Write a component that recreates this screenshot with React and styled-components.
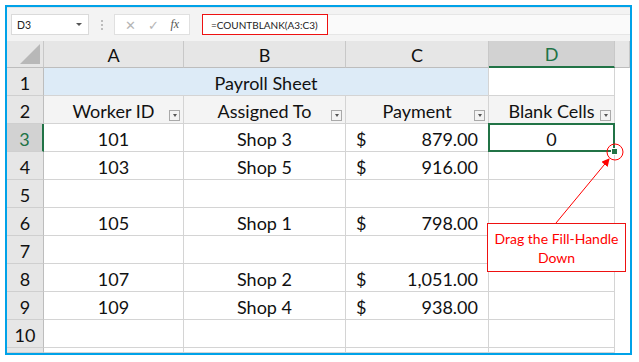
import React from 'react'
import styled, { createGlobalStyle, css } from 'styled-components'

const GlobalStyle = createGlobalStyle`
  body {
    margin: 0;
    background: #ffffff;
    font-family: Lato, "Liberation Sans", sans-serif;
  }
`

const GREEN = '#217346'
const GRID = '#d4d4d4'

const Frame = styled.div`
  margin: 5px;
  width: 627px;
  height: 350px;
  box-sizing: border-box;
  border: 2px solid #00a2e8;
  display: flex;
  flex-direction: column;
  overflow: hidden;
  background: #ffffff;
`

const FormulaBar = styled.div`
  height: 34px;
  flex: none;
  display: flex;
  align-items: center;
  padding-left: 4px;
  background: #f3f3f3;
  border-top: 1px solid #e2e2e2;
  box-sizing: border-box;
`

const NameBox = styled.div`
  width: 78px;
  height: 21px;
  box-sizing: border-box;
  background: #ffffff;
  border: 1px solid #dadada;
  display: flex;
  align-items: center;
  justify-content: space-between;
  padding: 0 6px 0 5px;
  font-size: 10.5px;
  color: #222;
`

const Caret = styled.span`
  width: 0;
  height: 0;
  border-left: 3px solid transparent;
  border-right: 3px solid transparent;
  border-top: 3px solid #555;
`

const Dots = styled.div`
  width: 25px;
  display: flex;
  flex-direction: column;
  align-items: center;
  gap: 2px;
  span {
    width: 2px;
    height: 2px;
    background: #bdbdbd;
  }
`

const FxBox = styled.div`
  width: 76px;
  height: 21px;
  box-sizing: border-box;
  background: #ffffff;
  border: 1px solid #e0e0e0;
  display: flex;
  align-items: center;
  justify-content: space-around;
  padding: 0 4px;
  color: #b5b5b5;
  font-size: 13px;
`

const Fx = styled.span`
  font-family: "Liberation Serif", serif;
  font-style: italic;
  font-size: 12px;
  color: #555;
`

const FormulaInput = styled.div`
  margin-left: 12px;
  flex: 1;
  height: 21px;
  display: flex;
  align-items: center;
  background: #fafafa;
  border-top: 1px solid #e6e6e6;
  border-bottom: 1px solid #e6e6e6;
  box-sizing: border-box;
`

const FormulaText = styled.div`
  height: 21px;
  width: 126px;
  box-sizing: border-box;
  border: 1px solid #ee1111;
  background: #ffffff;
  display: flex;
  align-items: center;
  padding-left: 8px;
  font-size: 10px;
  color: #222;
  white-space: nowrap;
`

const Sheet = styled.div`
  position: relative;
  flex: 1;
  display: grid;
  grid-template-columns: 37px 140px 162px 143px 126px 1fr;
  grid-template-rows: 27px repeat(10, 28px) 1fr;
  font-size: 18px;
  color: #111;
`

const Cell = styled.div`
  position: relative;
  box-sizing: border-box;
  border-right: 1px solid ${GRID};
  border-bottom: 1px solid ${GRID};
  display: flex;
  align-items: center;
  justify-content: ${p => p.$align || 'center'};
  padding: 2px ${p => (p.$pad ? '10px' : '0')} 0;
  white-space: nowrap;
  background: ${p => p.$bg || '#ffffff'};
  ${p => p.$span && css`grid-column: span ${p.$span};`}
  ${p => p.$selected && css`
    &::after {
      content: '';
      position: absolute;
      left: -1px;
      top: -1px;
      right: -1px;
      bottom: -1px;
      border: 2px solid ${GREEN};
    }
    &::before {
      content: '';
      position: absolute;
      right: -4px;
      bottom: -4px;
      width: 5px;
      height: 5px;
      background: ${GREEN};
      border: 1px solid #ffffff;
      z-index: 2;
    }
  `}
`

const ColHead = styled.div`
  box-sizing: border-box;
  background: ${p => (p.$active ? '#d2d2d2' : '#e6e6e6')};
  border-right: 1px solid #c8c8c8;
  border-bottom: ${p => (p.$active ? `2px solid ${GREEN}` : '1px solid #bdbdbd')};
  color: ${p => (p.$active ? GREEN : '#111')};
  display: flex;
  align-items: center;
  justify-content: center;
  padding-top: 1px;
`

const Corner = styled(ColHead)`
  position: relative;
  &::after {
    content: '';
    position: absolute;
    right: 3px;
    bottom: 3px;
    width: 0;
    height: 0;
    border-left: 20px solid transparent;
    border-bottom: 20px solid #b8b8b8;
  }
`

const RowHead = styled.div`
  box-sizing: border-box;
  background: ${p => (p.$active ? '#d2d2d2' : '#e6e6e6')};
  border-right: ${p => (p.$active ? `2px solid ${GREEN}` : '1px solid #bdbdbd')};
  border-bottom: 1px solid #cfcfcf;
  color: ${p => (p.$active ? GREEN : '#111')};
  display: flex;
  align-items: center;
  justify-content: center;
  padding-top: 2px;
`

const FilterBtn = styled.span`
  position: absolute;
  right: 3px;
  bottom: 2px;
  width: 11px;
  height: 11px;
  box-sizing: border-box;
  border: 1px solid #a9a9a9;
  background: #f3f3f3;
  display: flex;
  align-items: center;
  justify-content: center;
  &::after {
    content: '';
    border-left: 2.5px solid transparent;
    border-right: 2.5px solid transparent;
    border-top: 3px solid #555;
  }
`

const Money = styled.span`
  flex: 1;
  display: flex;
  justify-content: space-between;
`

const Callout = styled.div`
  position: absolute;
  left: 480px;
  top: 182px;
  width: 139px;
  height: 49px;
  box-sizing: border-box;
  border: 1px solid #ee1111;
  background: #ffffff;
  color: #ff0000;
  font-size: 14px;
  line-height: 19px;
  text-align: center;
  display: flex;
  flex-direction: column;
  justify-content: center;
  z-index: 3;
`

const Overlay = styled.svg`
  position: absolute;
  left: 0;
  top: 0;
  width: 100%;
  height: 100%;
  pointer-events: none;
  z-index: 4;
`

const rows = [
  null,
  ['Worker ID', 'Assigned To', 'Payment', 'Blank Cells'],
  ['101', 'Shop 3', '879.00', '0'],
  ['103', 'Shop 5', '916.00', ''],
  ['', '', '', ''],
  ['105', 'Shop 1', '798.00', ''],
  ['', '', '', ''],
  ['107', 'Shop 2', '1,051.00', ''],
  ['109', 'Shop 4', '938.00', ''],
  ['', '', '', '']
]

function App() {
  return (
    <>
      <GlobalStyle />
      <Frame>
        <FormulaBar>
          <NameBox>
            D3
            <Caret />
          </NameBox>
          <Dots>
            <span />
            <span />
            <span />
          </Dots>
          <FxBox>
            <span>✕</span>
            <span>✓</span>
            <Fx>fx</Fx>
          </FxBox>
          <FormulaInput>
            <FormulaText>=COUNTBLANK(A3:C3)</FormulaText>
          </FormulaInput>
        </FormulaBar>

        <Sheet>
          <Corner />
          {['A', 'B', 'C', 'D'].map(c => (
            <ColHead key={c} $active={c === 'D'}>{c}</ColHead>
          ))}
          <ColHead />

          {rows.map((r, i) => {
            const n = i + 1
            if (!r) {
              return (
                <React.Fragment key={n}>
                  <RowHead>{n}</RowHead>
                  <Cell $span={3} $bg="#ddebf7">Payroll Sheet</Cell>
                  <Cell />
                  <div />
                </React.Fragment>
              )
            }
            if (n === 2) {
              return (
                <React.Fragment key={n}>
                  <RowHead>{n}</RowHead>
                  {r.map(h => (
                    <Cell key={h} $bg="#f4f4f4">
                      {h}
                      <FilterBtn />
                    </Cell>
                  ))}
                  <div />
                </React.Fragment>
              )
            }
            return (
              <React.Fragment key={n}>
                <RowHead $active={n === 3}>{n}</RowHead>
                <Cell>{r[0]}</Cell>
                <Cell>{r[1]}</Cell>
                <Cell $pad>
                  {r[2] && (
                    <Money>
                      <span>$</span>
                      <span>{r[2]}</span>
                    </Money>
                  )}
                </Cell>
                <Cell $selected={n === 3}>{r[3]}</Cell>
                <div />
              </React.Fragment>
            )
          })}

          <RowHead />
          <Cell />
          <Cell />
          <Cell />
          <Cell />
          <div />

          <Callout>
            <span>Drag the Fill-Handle</span>
            <span>Down</span>
          </Callout>
          <Overlay>
            <defs>
              <marker id="head" markerWidth="8" markerHeight="8" refX="7" refY="4" orient="auto" markerUnits="userSpaceOnUse">
                <path d="M0,0 L8,4 L0,8 z" fill="#ff0000" />
              </marker>
            </defs>
            <circle cx="608" cy="111" r="8" fill="none" stroke="#ff0000" strokeWidth="1" />
            <line x1="549" y1="182" x2="602" y2="118" stroke="#ff0000" strokeWidth="1" markerEnd="url(#head)" />
          </Overlay>
        </Sheet>
      </Frame>
    </>
  )
}

export default App
